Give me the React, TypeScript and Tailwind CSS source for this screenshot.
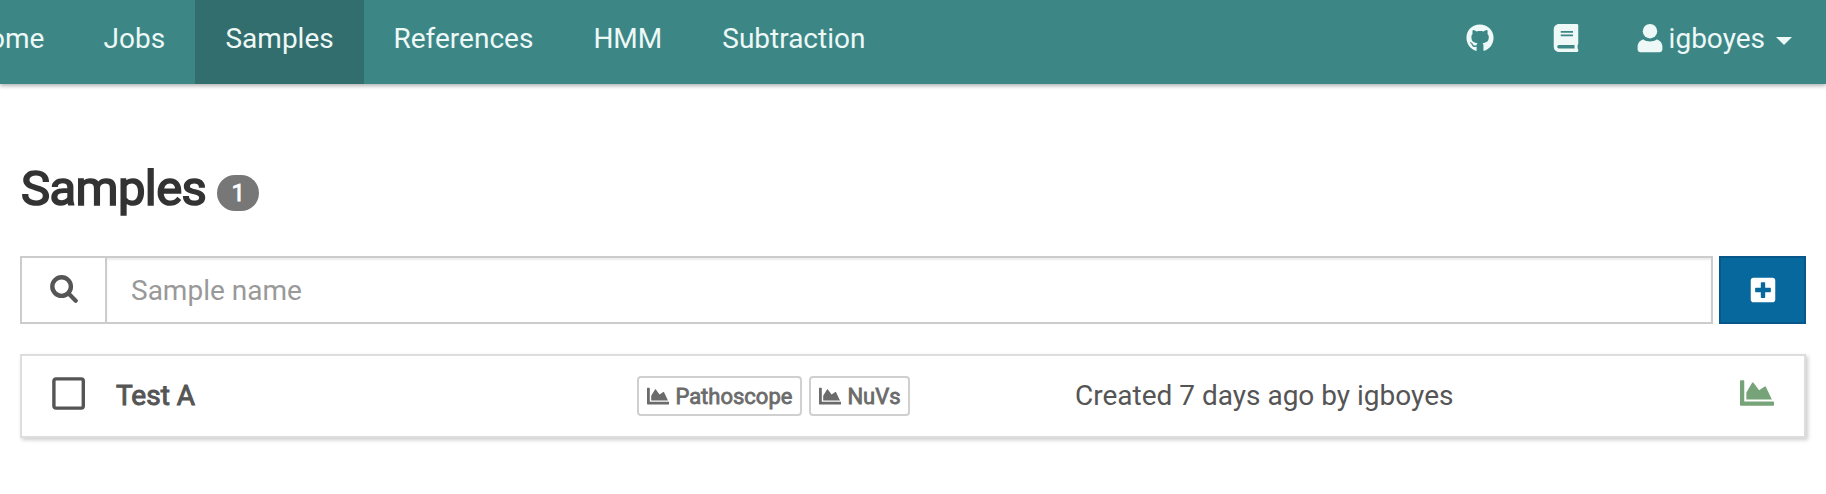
import React from "react";
import { FaGithub, FaBook, FaPlusSquare, FaChartArea } from "react-icons/fa";

function UserIcon({ className }: { className: string }) {
  return (
    <svg viewBox="0 0 28 28" fill="currentColor" className={className}>
      <circle cx="14" cy="7.2" r="7.2" />
      <path d="M7.5 15.5C9.3 17 11.5 17.4 14 17.4S18.7 17 20.5 15.5C24.2 16.2 26.4 19.2 26.4 23V25.8A2.6 2.6 0 0 1 23.8 28.2H4.2A2.6 2.6 0 0 1 1.6 25.8V23C1.6 19.2 3.8 16.2 7.5 15.5Z" />
    </svg>
  );
}

function SearchIcon({ className }: { className: string }) {
  return (
    <svg viewBox="0 0 28 28" fill="none" stroke="currentColor" className={className}>
      <circle cx="11.6" cy="11.6" r="9.3" strokeWidth="4.4" />
      <path d="M18.8 18.8 L25.7 25.7" strokeWidth="4.2" strokeLinecap="round" />
    </svg>
  );
}

function Tag({ label, className }: { label: string; className: string }) {
  return (
    <span className={`flex h-[40px] shrink-0 items-center rounded-[4px] border-2 border-[#d0d0d0] pl-2 text-[22px] text-[#6b6b6b] [-webkit-text-stroke:0.8px_#6b6b6b] ${className}`}>
      <FaChartArea className="mr-[6px] size-[22.4px] shrink-0" stroke="none" />
      <span className="pt-[2px]">{label}</span>
    </span>
  );
}

export default function App() {
  return (
    <div className="h-[494px] w-[1826px] overflow-hidden bg-white text-[28px] leading-10 text-[#555]" style={{ fontFamily: "Roboto, sans-serif" }}>
      <nav className="flex h-[84px] items-center bg-[#3c8786] pb-[6px] text-[#edf8f7] shadow-[0_2px_4px_rgba(0,0,0,0.3)]">
        <a className="-ml-[31px] w-[104.5px] whitespace-nowrap">Home</a>
        <a className="px-[30px]">Jobs</a>
        <a className="-mb-[6px] flex h-[84px] items-center bg-[#326e6d] px-[30.4px] pb-[6px]">Samples</a>
        <a className="pl-[29.4px] pr-[30px]">References</a>
        <a className="px-[30px]">HMM</a>
        <a className="px-[30px]">Subtraction</a>
        <FaGithub className="ml-auto mr-[58px] size-7 translate-y-[-1px]" />
        <FaBook className="mr-[56px] size-7 translate-y-[-1px]" />
        <UserIcon className="mr-[5px] size-7 -translate-y-[1px] overflow-visible" />
        <span>igboyes</span>
        <span className="ml-[11px] mr-[34px] mt-1 border-x-8 border-t-8 border-x-transparent border-t-[#edf8f7]" />
      </nav>
      <main className="px-5 pt-[80px]">
        <h1 className="flex h-[50px] items-center pl-px text-[49px] tracking-[-0.6px] text-[#333] [-webkit-text-stroke:1.7px_#333]">
          Samples
          <span className="ml-[11px] mt-[8px] flex h-[36px] w-[42px] items-center justify-center rounded-[20px] bg-[#777] text-[24px] tracking-normal text-white [-webkit-text-stroke:0.8px_#fff]">1</span>
        </h1>
        <div className="mt-[42px] flex h-[68px]">
          <div className="flex w-[87px] items-center justify-center border-2 border-[#ccc] pb-[3px]"><SearchIcon className="size-7" /></div>
          <div className="flex flex-1 items-center border-2 border-l-0 border-[#ccc] pl-6 pt-[2px] text-[#999] shadow-[inset_0_2px_2px_rgba(0,0,0,0.075)]">Sample name</div>
          <button className="ml-[6px] flex w-[87px] items-center justify-center border-2 border-[#07578a] bg-[#07689d] text-white"><FaPlusSquare className="size-7" /></button>
        </div>
        <div className="mt-[30px] flex h-[84px] items-center border-2 border-[#ddd] shadow-[2px_2px_4px_rgba(0,0,0,0.2)]">
          <svg viewBox="0 0 33 33" className="mb-[6px] ml-[30px] size-[33px]" fill="none" stroke="currentColor" strokeWidth="3.4">
            <rect x="1.9" y="1.9" width="29.4" height="29.2" rx="2" />
          </svg>
          <span className="ml-[31px] w-[521px] [-webkit-text-stroke:1px_#555]">Test A</span>
          <Tag label="Pathoscope" className="w-[165px]" />
          <Tag label="NuVs" className="ml-[7px] w-[101px]" />
          <span className="ml-[165px]">Created 7 days ago by igboyes</span>
          <FaChartArea className="mb-[7px] ml-auto mr-[30px] size-[34px] text-[#77a379]" />
        </div>
      </main>
    </div>
  );
}
